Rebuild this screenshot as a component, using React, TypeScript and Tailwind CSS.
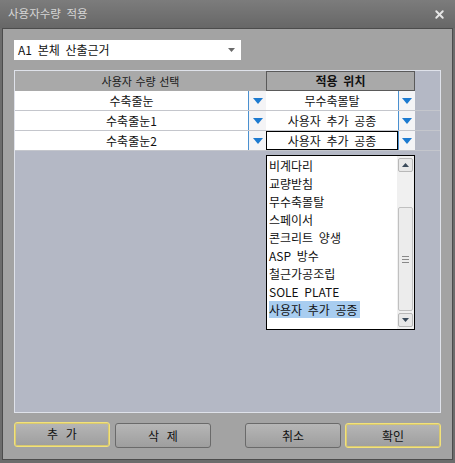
import { X } from "lucide-react";

const font = { fontFamily: '"Noto Sans CJK KR", "Noto Sans", sans-serif' };

const rows = [
  { name: "수축줄눈", place: "무수축몰탈", focus: false },
  { name: "수축줄눈1", place: "사용자 추가 공종", focus: false },
  { name: "수축줄눈2", place: "사용자 추가 공종", focus: true },
];

const options = [
  "비계다리",
  "교량받침",
  "무수축몰탈",
  "스페이서",
  "콘크리트 양생",
  "ASP 방수",
  "철근가공조립",
  "SOLE PLATE",
  "사용자 추가 공종",
];

function BlueArrow() {
  return (
    <div className="flex h-full items-center justify-center border-l border-[#4a90d0] bg-[#f4f4f6]">
      <svg width="10" height="6" viewBox="0 0 10 6">
        <path d="M0 0h10L5 6z" fill="#1c7ad0" />
      </svg>
    </div>
  );
}

function FormButton({ label, active }: { label: string; active?: boolean }) {
  return (
    <button
      className={
        "h-[25px] w-[96px] rounded-[3px] border bg-gradient-to-b from-[#b6b6b6] to-[#9e9e9e] text-[12px] text-[#111] [word-spacing:5px] " +
        (active ? "border-[#f2e27a] shadow-[inset_0_0_0_1px_#d8c870]" : "border-[#6a6a6a]")
      }
    >
      {label}
    </button>
  );
}

function Listbox() {
  return (
    <div className="absolute left-[251px] top-[84px] flex h-[175px] w-[149px] border border-black bg-white">
      <ul className="flex-1 pl-[2px] pt-[1px] text-[12px] leading-[18px] text-[#111]">
        {options.map((o, i) => (
          <li key={o}>
            <span className={i === options.length - 1 ? "bg-[#a8cdf0] pr-[2px]" : ""}>{o}</span>
          </li>
        ))}
      </ul>
      <div className="flex w-[17px] flex-col bg-[#f0f0f0] py-[2px]">
        <div className="mx-[1px] flex h-[14px] items-center justify-center rounded-[2px] border border-[#b8b8b8] bg-[#e8e8e8]">
          <svg width="7" height="4" viewBox="0 0 7 4">
            <path d="M0 4h7L3.5 0z" fill="#3a4a5a" />
          </svg>
        </div>
        <div className="mx-[1px] mt-[35px] flex h-[104px] items-center justify-center rounded-[2px] border border-[#c0c0c0] bg-[#ececec]">
          <div className="flex flex-col gap-[2px]">
            <div className="h-px w-[7px] bg-[#888]" />
            <div className="h-px w-[7px] bg-[#888]" />
            <div className="h-px w-[7px] bg-[#888]" />
          </div>
        </div>
        <div className="mx-[1px] mt-auto flex h-[14px] items-center justify-center rounded-[2px] border border-[#b8b8b8] bg-[#e8e8e8]">
          <svg width="7" height="4" viewBox="0 0 7 4">
            <path d="M0 0h7L3.5 4z" fill="#3a4a5a" />
          </svg>
        </div>
      </div>
    </div>
  );
}

export default function App() {
  return (
    <div className="flex h-[463px] w-[455px] flex-col bg-[#6c6c6c] [word-spacing:3px]" style={font}>
      <div className="flex h-[28px] items-center justify-between bg-gradient-to-b from-[#7c7c7c] to-[#676767] pl-[8px] pr-[9px]">
        <span className="text-[11.5px] text-[#d6d6d6]">사용자수량 적용</span>
        <X size={13} strokeWidth={3.5} className="text-[#e6e6e6]" />
      </div>
      <div className="mx-[2px] mb-[3px] flex flex-1 flex-col border border-[#4c4c4c] bg-[#a3a3a3] px-[11px] pb-[11px] pt-[11px]">
        <div className="flex h-[20px] w-[227px] items-center justify-between bg-white pl-[4px] pr-[6px]">
          <span className="text-[12px] text-[#111]">A1 본체 산출근거</span>
          <svg width="7" height="4" viewBox="0 0 7 4">
            <path d="M0 0h7L3.5 4z" fill="#6a6a6a" />
          </svg>
        </div>
        <div className="relative mt-[10px] flex-1 border border-[#dfe2ea] bg-[#b4b8c5]">
          <div className="flex h-[20px]">
            <div className="flex w-[251px] items-center justify-center bg-[#a9a9a9] text-[11px] text-[#1a1a1a] [word-spacing:1px]">
              사용자 수량 선택
            </div>
            <div className="flex w-[149px] items-center justify-center border border-[#5a5a5a] bg-[#a9a9a9] text-[12px] font-bold text-[#111]">
              적용 위치
            </div>
          </div>
          {rows.map((r) => (
            <div key={r.name} className="flex h-[20px] border-b border-[#c4c6cc] text-[12px] text-[#111]">
              <div className="flex w-[233px] items-center justify-center bg-white">{r.name}</div>
              <div className="w-[18px]">
                <BlueArrow />
              </div>
              <div
                className={
                  "flex w-[132px] items-center justify-center bg-white " +
                  (r.focus ? "border border-black" : "")
                }
              >
                {r.place}
              </div>
              <div className="w-[17px]">
                <BlueArrow />
              </div>
            </div>
          ))}
          <Listbox />
        </div>
        <div className="mt-[9px] flex">
          <FormButton label="추 가" active />
          <div className="ml-[5px]">
            <FormButton label="삭 제" />
          </div>
          <div className="ml-auto">
            <FormButton label="취소" />
          </div>
          <div className="ml-[4px]">
            <FormButton label="확인" active />
          </div>
        </div>
      </div>
    </div>
  );
}
